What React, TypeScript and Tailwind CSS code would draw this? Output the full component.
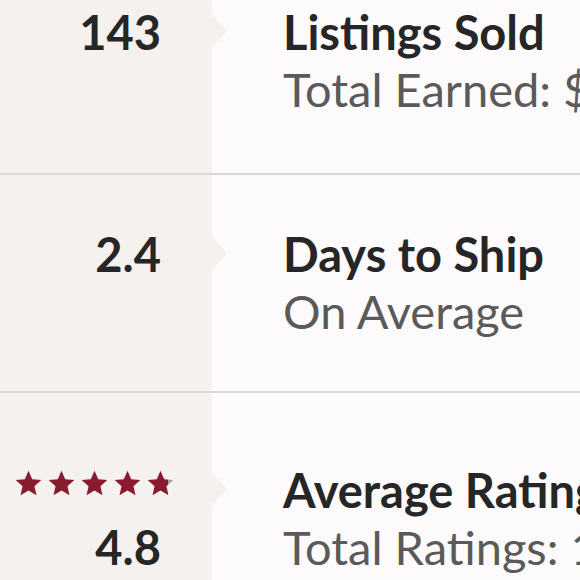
const font = { fontFamily: '"Lato", "Liberation Sans", sans-serif' };

function Star({ fill = 1, id }: { fill?: number; id: string }) {
  return (
    <svg width="27" height="26" viewBox="0 0 24 23" className="shrink-0">
      <defs>
        <linearGradient id={id} x1="0" x2="1" y1="0" y2="0">
          <stop offset={fill} stopColor="#8a1b2f" />
          <stop offset={fill} stopColor="#a3a3a3" />
        </linearGradient>
      </defs>
      <path
        d="M12 0.6L15.3 8.1 23.4 8.9 17.3 14.3 19.1 22.3 12 18.2 4.9 22.3 6.7 14.3 0.6 8.9 8.7 8.1z"
        fill={`url(#${id})`}
      />
    </svg>
  );
}

function Notch() {
  return (
    <span className="absolute -left-[71px] top-[11px] h-0 w-0 border-y-[16px] border-l-[15px] border-y-transparent border-l-[#f4f1ee]" />
  );
}

interface RowProps {
  value: string;
  title: string;
  sub: string;
  pad: string;
  height: string;
  stars?: boolean;
  last?: boolean;
}

function StatRow({ value, title, sub, pad, height, stars, last }: RowProps) {
  return (
    <div className={`flex ${height} ${last ? "" : "border-b-2 border-[#dcd9d7]"}`}>
      <div className={`w-[212px] shrink-0 bg-[#f4f1ee] pr-[51px] ${pad}`}>
        {stars && (
          <div className="mb-[24px] flex h-[25px] items-center gap-[6px] pl-[15px]">
            <Star id="s1" />
            <Star id="s2" />
            <Star id="s3" />
            <Star id="s4" />
            <Star id="s5" fill={0.8} />
          </div>
        )}
        <div className="text-right text-[47px] leading-[57px] font-bold text-[#262626]">{value}</div>
      </div>
      <div className={`min-w-0 flex-1 pl-[71px] whitespace-nowrap ${stars ? "pt-[69px]" : pad}`}>
        <div className="relative text-[47px] leading-[57px] font-bold text-[#262626]">
          <Notch />
          {title}
        </div>
        <div className="text-[47px] leading-[57px] text-[#5a5a5a]">{sub}</div>
      </div>
    </div>
  );
}

export default function App() {
  return (
    <div className="h-[580px] w-[580px] overflow-hidden bg-[#fcfafa]" style={font}>
      <StatRow value="143" title="Listings Sold" sub="Total Earned: $2,310" pad="pt-[4px]" height="h-[175px]" />
      <StatRow value="2.4" title="Days to Ship" sub="On Average" pad="pt-[51px]" height="h-[218px]" />
      <StatRow value="4.8" title="Average Rating" sub="Total Ratings: 119" pad="pt-[77px]" height="h-[190px]" stars last />
    </div>
  );
}
